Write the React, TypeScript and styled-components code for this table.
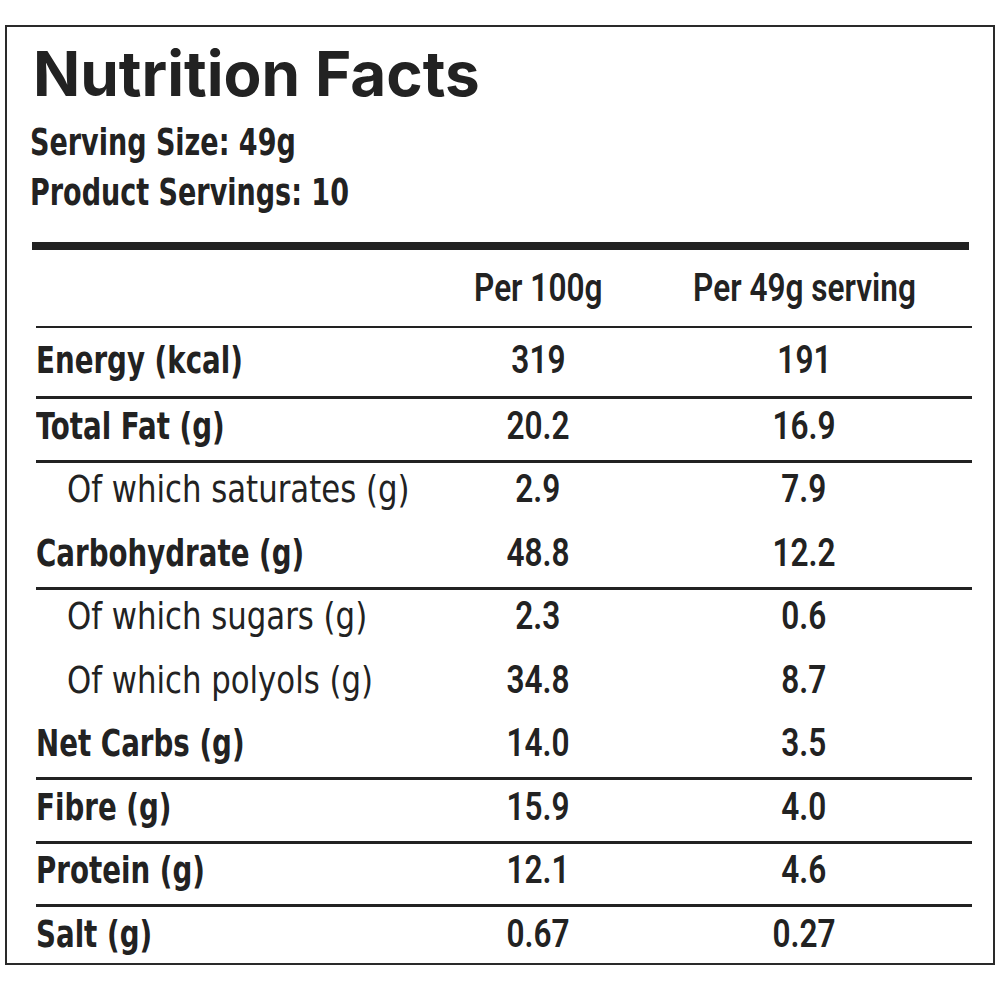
import React from "react";
import styled, { createGlobalStyle } from "styled-components";

const GlobalStyle = createGlobalStyle`
  html, body {
    margin: 0;
    padding: 0;
    background: #ffffff;
  }
`;

const Label = styled.div`
  box-sizing: border-box;
  width: 990px;
  height: 940px;
  margin: 25px 0 0 5px;
  border: 2px solid #2a2a2a;
  padding: 16px 0 0 24px;
  color: #222222;
  font-family: "DejaVu Sans Condensed", "DejaVu Sans", "Liberation Sans", sans-serif;
`;

const Title = styled.h1`
  margin: 0 0 0 2px;
  font-family: Inter, "Noto Sans", sans-serif;
  font-weight: 700;
  font-size: 62px;
  line-height: 62px;
`;

// the reference uses a narrow DIN-style face; squeeze the condensed face to its width
const Squeeze = styled.span<{ $sx: number; $origin?: string }>`
  display: inline-block;
  transform: scaleX(${(p) => p.$sx});
  transform-origin: ${(p) => p.$origin ?? "left"} center;
`;

const Serving = styled.p<{ $first?: boolean }>`
  margin: ${(p) => (p.$first ? 12 : 0)}px 0 0 -1px;
  font-weight: 700;
  font-size: 38px;
  line-height: 50px;
  white-space: nowrap;
`;

const ThickRule = styled.div`
  width: 937px;
  height: 8px;
  margin: 25px 0 0 1px;
  background: #222222;
`;

const Table = styled.div`
  width: 936px;
  margin-left: 5px;
`;

const Row = styled.div<{ $line?: boolean; $h?: number }>`
  box-sizing: border-box;
  display: grid;
  grid-template-columns: 370px 264px 268px;
  align-items: center;
  height: ${(p) => p.$h ?? 63.5}px;
  padding-bottom: 7px;
  border-top: 3px solid ${(p) => (p.$line ? "#222222" : "transparent")};
`;

const HeadRow = styled(Row)`
  height: 78px;
  padding-bottom: 0;
  border-top: none;
  border-bottom: 2px solid #222222;
`;

const Name = styled.div<{ $sub?: boolean }>`
  padding-left: ${(p) => (p.$sub ? 31 : 0)}px;
  font-weight: ${(p) => (p.$sub ? 400 : 700)};
  font-size: 38px;
  line-height: 44px;
  white-space: nowrap;
`;

const Value = styled.div`
  display: flex;
  justify-content: center;
  font-family: Roboto, "DejaVu Sans Condensed", sans-serif;
  font-weight: 600;
  font-size: 39px;
  line-height: 44px;
  white-space: nowrap;
`;

type Item = {
  name: string;
  per100: string;
  perServing: string;
  sub?: boolean;
  line?: boolean;
};

const items: Item[] = [
  { name: "Energy (kcal)", per100: "319", perServing: "191" },
  { name: "Total Fat (g)", per100: "20.2", perServing: "16.9", line: true },
  { name: "Of which saturates (g)", per100: "2.9", perServing: "7.9", sub: true, line: true },
  { name: "Carbohydrate (g)", per100: "48.8", perServing: "12.2" },
  { name: "Of which sugars (g)", per100: "2.3", perServing: "0.6", sub: true, line: true },
  { name: "Of which polyols (g)", per100: "34.8", perServing: "8.7", sub: true },
  { name: "Net Carbs (g)", per100: "14.0", perServing: "3.5" },
  { name: "Fibre (g)", per100: "15.9", perServing: "4.0", line: true },
  { name: "Protein (g)", per100: "12.1", perServing: "4.6", line: true },
  { name: "Salt (g)", per100: "0.67", perServing: "0.27", line: true },
];

export default function App() {
  return (
    <>
      <GlobalStyle />
      <Label>
        <Title>Nutrition Facts</Title>
        <Serving $first>
          <Squeeze $sx={0.79}>Serving Size: 49g</Squeeze>
        </Serving>
        <Serving>
          <Squeeze $sx={0.79}>Product Servings: 10</Squeeze>
        </Serving>
        <ThickRule />
        <Table>
          <HeadRow>
            <div />
            <Value>
              <Squeeze $sx={0.81} $origin="center">Per 100g</Squeeze>
            </Value>
            <Value>
              <Squeeze $sx={0.81} $origin="center">Per 49g serving</Squeeze>
            </Value>
          </HeadRow>
          {items.map((it, i) => (
            <Row key={it.name} $line={it.line} $h={i === 0 ? 68 : undefined}>
              <Name $sub={it.sub}>
                <Squeeze $sx={it.sub ? 0.9 : 0.81}>{it.name}</Squeeze>
              </Name>
              <Value>
                <Squeeze $sx={0.81} $origin="center">{it.per100}</Squeeze>
              </Value>
              <Value>
                <Squeeze $sx={0.81} $origin="center">{it.perServing}</Squeeze>
              </Value>
            </Row>
          ))}
        </Table>
      </Label>
    </>
  );
}
